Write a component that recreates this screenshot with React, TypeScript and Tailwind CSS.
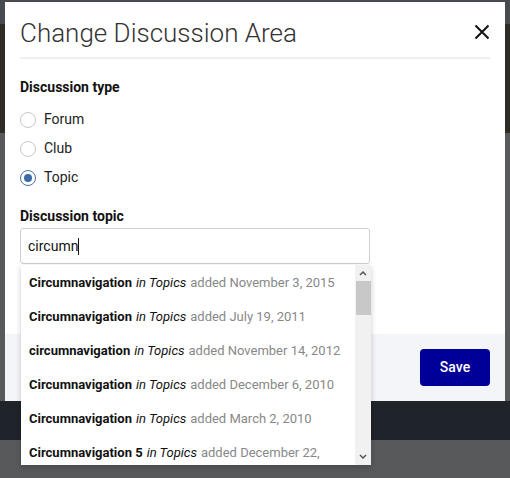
import React from "react";

const items = [
  { name: "Circumnavigation", date: "November 3, 2015" },
  { name: "Circumnavigation", date: "July 19, 2011" },
  { name: "circumnavigation", date: "November 14, 2012" },
  { name: "Circumnavigation", date: "December 6, 2010" },
  { name: "Circumnavigation", date: "March 2, 2010" },
  { name: "Circumnavigation 5", date: "December 22," },
];

function Radio({ label, checked }: { label: string; checked?: boolean }) {
  return (
    <div className="flex items-center h-[29px]">
      <span
        className={`w-[16px] h-[16px] rounded-full border flex items-center justify-center bg-white ${
          checked ? "border-[#4a72a8]" : "border-[#c8c8c8]"
        }`}
      >
        {checked && <span className="w-[8px] h-[8px] rounded-full bg-[#3a6aa8]" />}
      </span>
      <span className="ml-[8px] text-[14px] text-[#222]">{label}</span>
    </div>
  );
}

export default function App() {
  return (
    <div
      className="relative w-[510px] h-[478px] overflow-hidden"
      style={{ fontFamily: "Roboto, 'Noto Sans', sans-serif" }}
    >
      {/* dimmed background page */}
      <div className="flex flex-col h-full">
        <div className="h-[24px] bg-[#474a4e]" />
        <div className="h-[109px] bg-[#2e2c25]" />
        <div className="flex-1 bg-[#58595b] relative">
          <div className="h-[268px]" />
          <div className="h-[39px] bg-[#1f232a]" />
        </div>
      </div>

      {/* modal */}
      <div className="absolute left-[5px] top-[2px] w-[500px] h-[399px] bg-white flex flex-col">
        <div className="px-[15px] pt-[14px]">
          <div className="flex items-center justify-between h-[34px]">
            <span className="text-[26px] font-light text-[#333] leading-none">Change Discussion Area</span>
            <svg width="16" height="16" viewBox="0 0 16 16" className="-mt-[3px]">
              <path d="M1.5 1.5 L14.5 14.5 M14.5 1.5 L1.5 14.5" stroke="#111" strokeWidth="2" />
            </svg>
          </div>
          <div className="mt-[7px] h-[2px] bg-[#f0f0f0]" />
          <div className="mt-[21px] text-[14px] font-bold text-[#111] leading-none">Discussion type</div>
          <div className="mt-[11px] flex flex-col">
            <Radio label="Forum" />
            <Radio label="Club" />
            <Radio label="Topic" checked />
          </div>
          <div className="mt-[17px] text-[14px] font-bold text-[#111] leading-none">Discussion topic</div>
          <div className="mt-[5px] w-[350px] h-[36px] border border-[#cfcfcf] rounded-[3px] flex items-center px-[7px]">
            <span className="text-[14px] text-[#111]">circumn</span>
            <span className="w-[1px] h-[17px] bg-[#111]" />
          </div>
        </div>
        <div className="flex-1" />
        <div className="h-[67px] bg-[#f4f5f9] flex items-center justify-end pr-[15px]">
          <button className="w-[70px] h-[37px] bg-[#000099] rounded-[4px] text-white text-[14px] font-medium">
            Save
          </button>
        </div>
      </div>

      {/* dropdown */}
      <div className="absolute left-[21px] top-[265px] w-[350px] h-[200px] bg-white shadow-[0_2px_6px_rgba(0,0,0,0.2)] flex">
        <div className="flex-1 overflow-hidden pt-[1px]">
          {items.map((it, i) => (
            <div key={i} className="h-[34px] flex items-center px-[8px] text-[13px] whitespace-nowrap">
              <span className="font-bold text-[#111]">{it.name}</span>
              <span className="italic text-[#111] ml-[4px]">in Topics</span>
              <span className="text-[#888] ml-[4px]">added {it.date}</span>
            </div>
          ))}
        </div>
        <div className="w-[16px] bg-[#f1f1f1] flex flex-col items-center">
          <svg width="10" height="16" viewBox="0 0 10 16">
            <path d="M2 10 L5 7 L8 10" stroke="#555" strokeWidth="1.5" fill="none" />
          </svg>
          <div className="w-[15px] h-[34px] bg-[#c8c8c8] ml-[1px]" />
          <div className="flex-1" />
          <svg width="10" height="16" viewBox="0 0 10 16">
            <path d="M2 6 L5 9 L8 6" stroke="#555" strokeWidth="1.5" fill="none" />
          </svg>
        </div>
      </div>
    </div>
  );
}
